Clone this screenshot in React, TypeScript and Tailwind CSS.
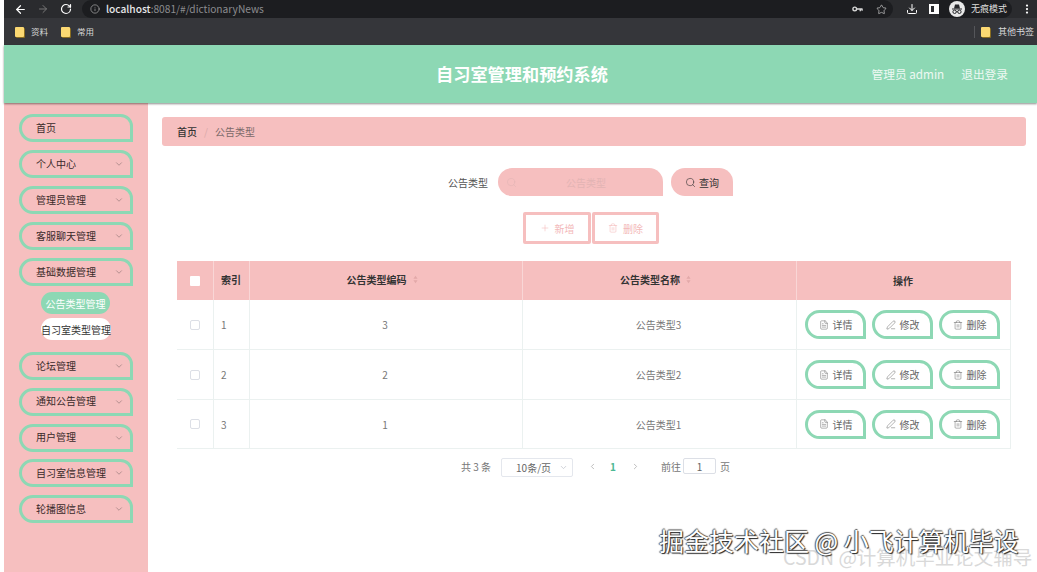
import { ArrowLeft, ArrowRight, RotateCw, Info, Star, Download, EllipsisVertical, ChevronDown, ChevronLeft, ChevronRight, Search, Plus, Trash2, FileText, PenLine } from "lucide-react";

const font = { fontFamily: '"Noto Sans CJK SC","Liberation Sans",sans-serif' };

function Folder() {
  return <span className="inline-block w-[9px] h-[10px] bg-[#fbd872] rounded-[1px] shadow-[1px_1px_0_#8a6d20] shrink-0" />;
}

function KeyIcon() {
  return (
    <svg viewBox="0 0 12 8" className="w-[11px] h-[8px] text-[#d8d8d8] mr-[13px]" fill="none" stroke="currentColor" strokeWidth="1.5">
      <circle cx="3" cy="4" r="2" />
      <path d="M5 4h6.5M9 4v2.5M11 4v2" />
    </svg>
  );
}

function IncognitoIcon() {
  return (
    <svg viewBox="0 0 16 16" className="w-[16px] h-[16px] ml-[10px] shrink-0">
      <circle cx="8" cy="8" r="8" fill="#e8e8e8" />
      <path d="M3 7.5h10v1H3z" fill="#26272a" />
      <path d="M5 7.5 6 3.6h4l1 3.9z" fill="#26272a" />
      <circle cx="5.6" cy="10.8" r="1.7" fill="none" stroke="#26272a" strokeWidth="1" />
      <circle cx="10.4" cy="10.8" r="1.7" fill="none" stroke="#26272a" strokeWidth="1" />
      <path d="M7.2 10.6h1.6" stroke="#26272a" strokeWidth="0.8" />
    </svg>
  );
}

function SortIcon() {
  return (
    <svg viewBox="0 0 6 10" className="w-[5px] h-[9px] ml-[6px] mr-[6px] shrink-0" fill="#e2a9a9">
      <path d="M3 0.5 5.5 4h-5zM3 9.5.5 6h5z" />
    </svg>
  );
}

function MenuItem({ label, arrow = true }: { label: string; arrow?: boolean }) {
  return (
    <div className="w-[114px] h-[28px] ml-[15px] shrink-0 border-[3px] border-[#8dd8b4] rounded-tl-[16px] rounded-tr-[14px] rounded-bl-[16px] flex items-center justify-between pl-[14px] pr-[6px] text-[10px] leading-none text-[#3a2a2a]">
      <span className="-mt-[1px] whitespace-nowrap">{label}</span>
      {arrow && <ChevronDown className="w-[10px] h-[10px] text-[#8f7474] shrink-0" strokeWidth={1.5} />}
    </div>
  );
}

function RowButton({ icon, label }: { icon: React.ReactNode; label: string }) {
  return (
    <div className="w-[61px] h-[29px] border-[3px] border-[#8dd8b4] rounded-tl-[15px] rounded-tr-[14px] rounded-bl-[15px] flex items-center justify-center gap-[4px] text-[10px] text-[#666] bg-white">
      {icon}
      <span>{label}</span>
    </div>
  );
}

function Row({ idx, code, name, last }: { idx: number; code: number; name: string; last?: boolean }) {
  return (
    <div className={`flex border-b border-[#ebf1f0] text-[10px] text-[#777] ${last ? "h-[49px]" : "h-[50px]"}`}>
      <div className="w-[37px] border-r border-[#ebf1f0] flex items-center justify-center">
        <span className="w-[10px] h-[10px] border border-[#dcdfe6] rounded-[2px] bg-white" />
      </div>
      <div className="w-[36px] border-r border-[#ebf1f0] flex items-center pl-[7px]">{idx}</div>
      <div className="w-[273px] border-r border-[#ebf1f0] flex items-center justify-center pr-[2px]">{code}</div>
      <div className="w-[274px] border-r border-[#ebf1f0] flex items-center justify-center pr-[2px]">{name}</div>
      <div className="flex-1 border-r border-[#ebf1f0] flex items-center pl-[8px] gap-[6px]">
        <RowButton icon={<FileText className="w-[10px] h-[10px]" strokeWidth={1.2} />} label="详情" />
        <RowButton icon={<PenLine className="w-[10px] h-[10px]" strokeWidth={1.2} />} label="修改" />
        <RowButton icon={<Trash2 className="w-[10px] h-[10px]" strokeWidth={1.2} />} label="删除" />
      </div>
    </div>
  );
}

export default function App() {
  const top = ["首页"];
  const group1 = ["个人中心", "管理员管理", "客服聊天管理", "基础数据管理"];
  const group2 = ["论坛管理", "通知公告管理", "用户管理", "自习室信息管理", "轮播图信息"];
  return (
    <div style={font} className="relative w-[1037px] h-[572px] overflow-hidden bg-white pl-[4px] flex flex-col">
      {/* browser chrome */}
      <div className="h-[18px] bg-[#2a2b2e] flex items-center pl-[10px] pr-[6px] text-white shrink-0">
        <ArrowLeft className="w-[13px] h-[13px] shrink-0" strokeWidth={2.2} />
        <ArrowRight className="w-[12px] h-[12px] ml-[10px] text-[#777] shrink-0" strokeWidth={2} />
        <RotateCw className="w-[12px] h-[12px] ml-[11px] shrink-0" strokeWidth={2.4} />
        <div className="ml-[10px] w-[811px] h-[18px] bg-[#1c1d20] rounded-r-[9px] rounded-l-[9px] flex items-center pl-[8px] shrink-0">
          <Info className="w-[10px] h-[10px] text-[#bbb]" strokeWidth={1.5} />
          <span className="ml-[6px] font-medium text-[10.2px] text-[#e8e8e8]">localhost</span>
          <span className="text-[10.2px] text-[#8b8c8f]">:8081/#/dictionaryNews</span>
          <div className="flex-1" />
          <KeyIcon />
          <Star className="w-[11px] h-[11px] text-[#ccc] mr-[6px]" strokeWidth={1.5} />
        </div>
        <Download className="w-[12px] h-[12px] ml-[13px] shrink-0" strokeWidth={2} />
        <span className="w-[10px] h-[10px] ml-[11px] border-[2px] border-white border-r-[5px] shrink-0" />
        <div className="flex items-center h-[18px] pr-[5px] bg-[#1c1d20] rounded-r-[9px]">
          <IncognitoIcon />
          <span className="ml-[6px] text-[9px] text-[#ddd] whitespace-nowrap">无痕模式</span>
        </div>
        <EllipsisVertical className="w-[12px] h-[12px] ml-[9px] shrink-0" strokeWidth={2.5} />
      </div>
      <div className="h-[27px] bg-[#35363a] flex items-center pl-[11px] pr-[3px] text-[8.5px] text-[#d8d8d8] shrink-0">
        <Folder />
        <span className="ml-[7px]">资料</span>
        <span className="w-[13px]" />
        <Folder />
        <span className="ml-[7px]">常用</span>
        <div className="flex-1" />
        <span className="w-px h-[12px] bg-[#55565a] mr-[6px]" />
        <Folder />
        <span className="ml-[8px] text-[9px]">其他书签</span>
      </div>

      {/* app */}
      <div className="flex-1 flex flex-col min-h-0">
        <div className="h-[58px] bg-[#8dd8b4] shadow-[0_1px_2px_rgba(0,0,0,0.45)] relative z-10 shrink-0 flex items-center text-white">
          <span className="ml-[432px] text-[17.2px] font-bold whitespace-nowrap">自习室管理和预约系统</span>
          <div className="flex-1" />
          <span className="text-[11.7px] text-[#eef9f3] whitespace-nowrap">管理员 admin</span>
          <span className="text-[11.7px] text-[#eef9f3] ml-[17px] mr-[29px] whitespace-nowrap">退出登录</span>
        </div>

        <div className="flex-1 flex min-h-0">
          {/* sidebar */}
          <div className="w-[144px] bg-[#f6bfbf] pt-[11px] flex flex-col shrink-0">
            <div className="flex flex-col gap-[8px]">
              {top.map((l) => <MenuItem key={l} label={l} arrow={false} />)}
              {group1.map((l) => <MenuItem key={l} label={l} />)}
            </div>
            <div className="flex flex-col items-start pl-[37px] gap-[4px] mt-[6px] mb-[12px] text-[10px]">
              <div className="w-[69px] h-[22px] rounded-full bg-[#8dd8b4] text-white flex items-center justify-center whitespace-nowrap">公告类型管理</div>
              <div className="w-[70px] h-[22px] rounded-full bg-white text-[#333] flex items-center justify-center whitespace-nowrap">自习室类型管理</div>
            </div>
            <div className="flex flex-col gap-[7.75px]">
              {group2.map((l) => <MenuItem key={l} label={l} />)}
            </div>
          </div>

          {/* content */}
          <div className="flex-1 pt-[14px] pl-[14px] pr-[11px]">
            <div className="h-[29px] bg-[#f6bfbf] rounded-[3px] flex items-center pl-[15px] text-[10px]">
              <span className="text-[#333] font-medium">首页</span>
              <span className="mx-[7px] text-[#d9a9a9]">/</span>
              <span className="text-[#7c6a6a]">公告类型</span>
            </div>

            <div className="flex items-center h-[28px] mt-[22px] pl-[286px] text-[10px]">
              <span className="text-[#555] w-[50px]">公告类型</span>
              <div className="w-[165px] h-[28px] bg-[#f6bfbf] rounded-tl-[14px] rounded-tr-[14px] rounded-bl-[14px] flex items-center pl-[8px] text-[#e3b4b4]">
                <Search className="w-[11px] h-[11px]" strokeWidth={1.3} />
                <span className="ml-[49px]">公告类型</span>
              </div>
              <div className="w-[62px] h-[28px] ml-[8px] bg-[#f6bfbf] rounded-tl-[14px] rounded-tr-[14px] rounded-bl-[14px] flex items-center justify-center gap-[3px] text-[#333]">
                <Search className="w-[11px] h-[11px]" strokeWidth={1.3} />
                <span>查询</span>
              </div>
            </div>

            <div className="flex items-center h-[32px] mt-[16px] pl-[361px] gap-[1px] text-[10px] text-[#f3b9b9]">
              <div className="w-[68px] h-[32px] border-[3px] border-[#f6bfbf] rounded-[2px] flex items-center justify-center gap-[5px]">
                <Plus className="w-[10px] h-[10px]" strokeWidth={1.3} />
                <span>新增</span>
              </div>
              <div className="w-[67px] h-[32px] border-[3px] border-[#f6bfbf] rounded-[2px] flex items-center justify-center gap-[5px]">
                <Trash2 className="w-[10px] h-[10px]" strokeWidth={1.3} />
                <span>删除</span>
              </div>
            </div>

            {/* table */}
            <div className="w-[834px] ml-[15px] mt-[17px]">
              <div className="flex h-[39px] bg-[#f6bfbf] text-[10px] font-bold text-[#333]">
                <div className="w-[37px] border-r border-[#f9d6d6] flex items-center justify-center">
                  <span className="w-[10px] h-[10px] bg-white rounded-[1px]" />
                </div>
                <div className="w-[36px] border-r border-[#f9d6d6] flex items-center pl-[7px] pb-[2px]">索引</div>
                <div className="w-[273px] border-r border-[#f9d6d6] flex items-center justify-center pr-[2px] pb-[2px]">
                  <span>公告类型编码</span>
                  <SortIcon />
                </div>
                <div className="w-[274px] border-r border-[#f9d6d6] flex items-center justify-center pr-[2px] pb-[2px]">
                  <span>公告类型名称</span>
                  <SortIcon />
                </div>
                <div className="flex-1 flex items-center justify-center pr-[2px]">操作</div>
              </div>
              <Row idx={1} code={3} name="公告类型3" />
              <Row idx={2} code={2} name="公告类型2" />
              <Row idx={3} code={1} name="公告类型1" last />
            </div>

            {/* pagination */}
            <div className="flex items-center h-[16px] mt-[9px] pl-[299px] text-[10px] text-[#777]">
              <span className="whitespace-nowrap">共 3 条</span>
              <div className="w-[72px] h-[19px] self-start ml-[10px] border border-[#e4e7ed] rounded-[2px] flex items-center pl-[14px] pr-[4px] text-[#666]">
                <span className="flex-1 whitespace-nowrap">10条/页</span>
                <ChevronDown className="w-[9px] h-[9px] text-[#c0c4cc]" />
              </div>
              <ChevronLeft className="w-[9px] h-[9px] ml-[15px] text-[#aaa]" />
              <span className="ml-[13px] font-bold text-[#4cb894]">1</span>
              <ChevronRight className="w-[9px] h-[9px] ml-[15px] text-[#aaa]" />
              <span className="ml-[21px] whitespace-nowrap">前往</span>
              <div className="w-[33px] h-[16px] ml-[2px] border border-[#dcdfe6] rounded-[2px] flex items-center justify-center text-[#666]">1</div>
              <span className="ml-[4px]">页</span>
            </div>
          </div>
        </div>
      </div>

      {/* watermarks */}
      <div className="absolute left-[783px] top-[546px] text-[19.5px] leading-[22px] text-[#d9d9d9] whitespace-nowrap">CSDN @计算机毕业论文辅导</div>
      <div className="absolute left-[659px] top-[523px] text-[25px] leading-[34px] text-white whitespace-nowrap [text-shadow:1px_1px_1px_#222,-1px_0_1px_#555,0_-1px_1px_#555]">掘金技术社区 @ 小飞计算机毕设</div>
    </div>
  );
}
